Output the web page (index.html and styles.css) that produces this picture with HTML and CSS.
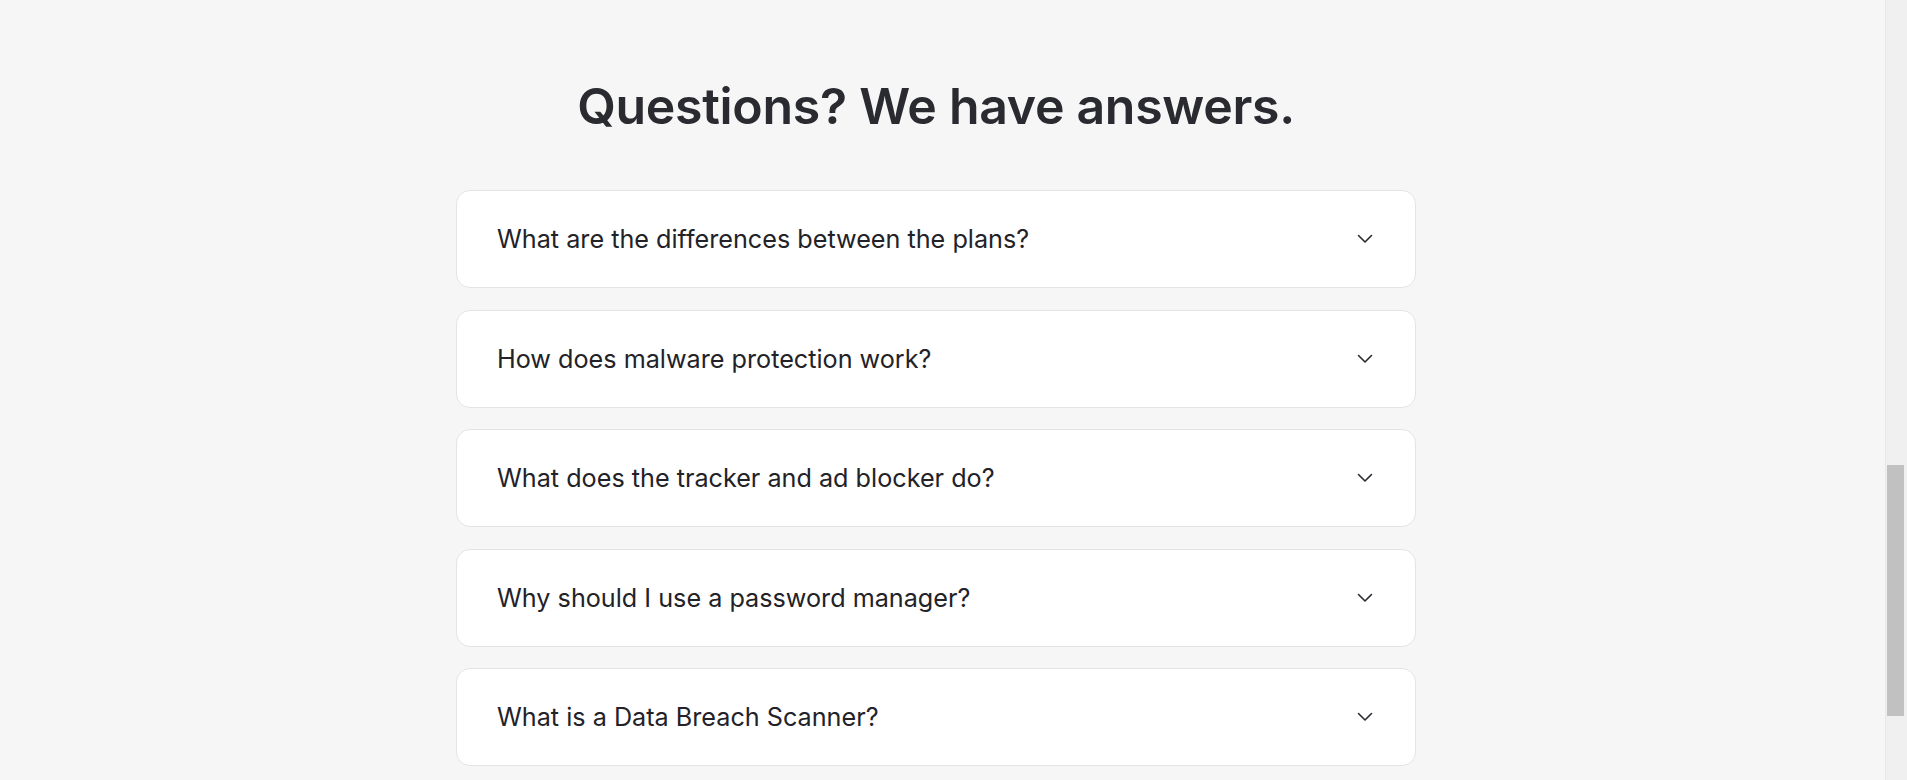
FILE: index.html
```html
<!DOCTYPE html>
<html lang="en">
<head>
<meta charset="utf-8">
<title>FAQ</title>
<link rel="stylesheet" href="styles.css">
</head>
<body>
<div class="page">
  <main class="main">
    <section class="faq">
      <h2 class="faq-title">Questions? We have answers.</h2>
      <div class="faq-list">
        <div class="faq-item">
          <span class="faq-q">What are the differences between the plans?</span>
          <svg class="chev" width="16" height="10" viewBox="0 0 16 10"><path d="M1.5 1.5 8 8l6.5-6.5" fill="none" stroke="#2a2a30" stroke-width="1.6" stroke-linecap="round" stroke-linejoin="round"/></svg>
        </div>
        <div class="faq-item">
          <span class="faq-q">How does malware protection work?</span>
          <svg class="chev" width="16" height="10" viewBox="0 0 16 10"><path d="M1.5 1.5 8 8l6.5-6.5" fill="none" stroke="#2a2a30" stroke-width="1.6" stroke-linecap="round" stroke-linejoin="round"/></svg>
        </div>
        <div class="faq-item">
          <span class="faq-q">What does the tracker and ad blocker do?</span>
          <svg class="chev" width="16" height="10" viewBox="0 0 16 10"><path d="M1.5 1.5 8 8l6.5-6.5" fill="none" stroke="#2a2a30" stroke-width="1.6" stroke-linecap="round" stroke-linejoin="round"/></svg>
        </div>
        <div class="faq-item">
          <span class="faq-q">Why should I use a password manager?</span>
          <svg class="chev" width="16" height="10" viewBox="0 0 16 10"><path d="M1.5 1.5 8 8l6.5-6.5" fill="none" stroke="#2a2a30" stroke-width="1.6" stroke-linecap="round" stroke-linejoin="round"/></svg>
        </div>
        <div class="faq-item">
          <span class="faq-q">What is a Data Breach Scanner?</span>
          <svg class="chev" width="16" height="10" viewBox="0 0 16 10"><path d="M1.5 1.5 8 8l6.5-6.5" fill="none" stroke="#2a2a30" stroke-width="1.6" stroke-linecap="round" stroke-linejoin="round"/></svg>
        </div>
      </div>
    </section>
  </main>
  <div class="scrollbar">
    <div class="scroll-thumb"></div>
  </div>
</div>
</body>
</html>
```
FILE: styles.css
```css
* { box-sizing: border-box; }
html, body {
  margin: 0;
  height: 100%;
  overflow: hidden;
}
body {
  background: #f6f6f6;
  font-family: Inter, "Noto Sans", sans-serif;
  color: #2a2a31;
}
.page {
  display: flex;
  height: 780px;
}
.main {
  flex: 1;
  padding-right: 13px;
  overflow: hidden;
}
.faq {
  width: 960px;
  margin: 0 auto;
  padding-top: 76px;
}
.faq-title {
  margin: 0 0 54px;
  text-align: center;
  font-size: 50px;
  line-height: 60px;
  font-weight: 600;
  letter-spacing: -0.3px;
  color: #2a2a31;
}
.faq-list {
  display: flex;
  flex-direction: column;
  gap: 21.5px;
}
.faq-item {
  height: 98px;
  flex-shrink: 0;
  background: #fff;
  border: 1px solid #e4e4e6;
  border-radius: 14px;
  display: flex;
  align-items: center;
  justify-content: space-between;
  padding: 0 42px 0 40px;
}
.faq-q {
  font-size: 25.2px;
  font-weight: 400;
  color: #222228;
}
.chev { display: block; }
.scrollbar {
  width: 22px;
  flex-shrink: 0;
  background: #f0f0f0;
  border-left: 1px solid #e8e8e8;
  padding: 465px 3px 0 1px;
}
.scroll-thumb {
  height: 251px;
  background: #c1c1c1;
}
```
